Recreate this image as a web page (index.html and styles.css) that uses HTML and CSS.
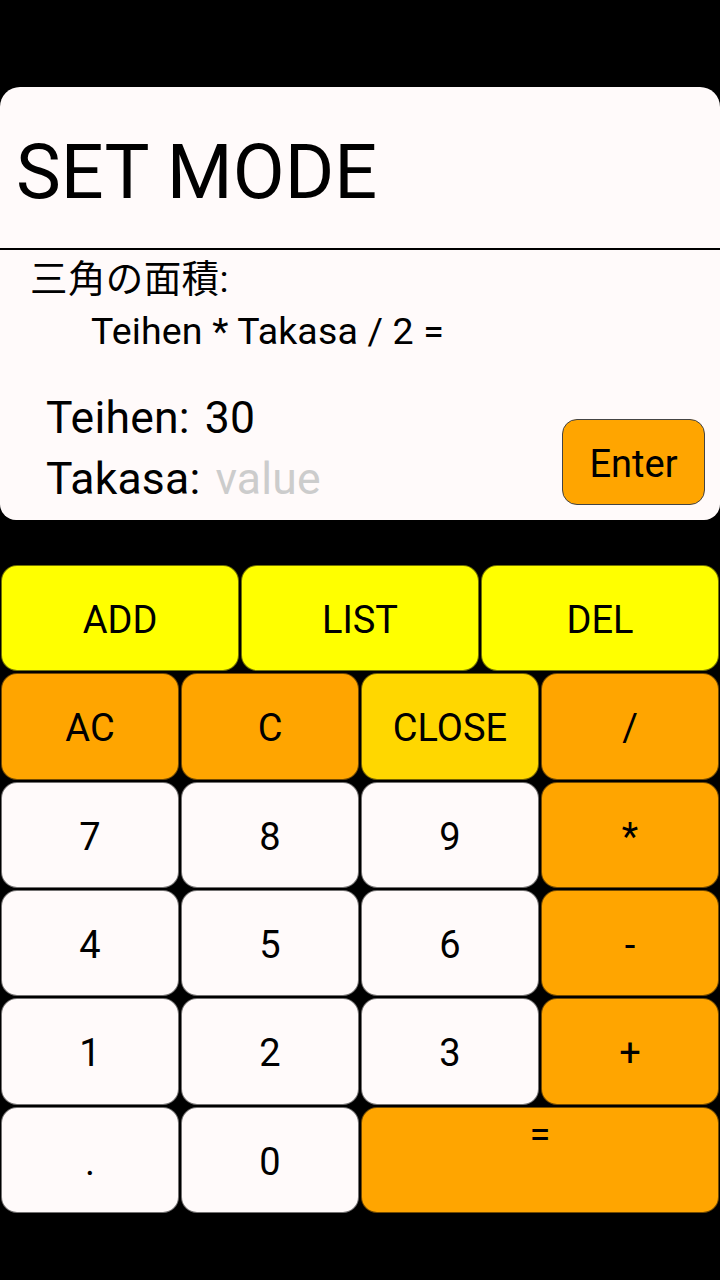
FILE: index.html
```html
<!DOCTYPE html>
<html lang="ja">
<head>
<meta charset="utf-8">
<title>SET MODE</title>
<link rel="stylesheet" href="styles.css">
</head>
<body>
<div class="screen">
  <section class="panel">
    <header class="panel-head">SET MODE</header>
    <div class="divider"></div>
    <div class="formula">
      <div class="formula-title">三角の面積:</div>
      <div class="formula-expr">Teihen * Takasa / 2 =</div>
    </div>
    <div class="inputs">
      <div class="fields">
        <div class="field"><span class="label">Teihen:</span><span class="value">30</span></div>
        <div class="field"><span class="label">Takasa:</span><span class="value hint">value</span></div>
      </div>
      <button class="enter">Enter</button>
    </div>
  </section>

  <div class="keypad">
    <button class="key wide yellow">ADD</button>
    <button class="key wide yellow">LIST</button>
    <button class="key wide yellow">DEL</button>

    <button class="key orange">AC</button>
    <button class="key orange">C</button>
    <button class="key gold">CLOSE</button>
    <button class="key orange">/</button>

    <button class="key white">7</button>
    <button class="key white">8</button>
    <button class="key white">9</button>
    <button class="key orange">*</button>

    <button class="key white">4</button>
    <button class="key white">5</button>
    <button class="key white">6</button>
    <button class="key orange">-</button>

    <button class="key white">1</button>
    <button class="key white">2</button>
    <button class="key white">3</button>
    <button class="key orange">+</button>

    <button class="key white">.</button>
    <button class="key white">0</button>
    <button class="key double orange top">=</button>
  </div>
</div>
</body>
</html>
```

FILE: styles.css
```css
* {
  box-sizing: border-box;
}

html, body {
  margin: 0;
  padding: 0;
  background: #000;
}

body {
  width: 720px;
  height: 1280px;
  overflow: hidden;
  font-family: "Roboto", "Noto Sans CJK JP", sans-serif;
  color: #000;
}

.screen {
  display: flex;
  flex-direction: column;
  padding-top: 87px;
}

.panel {
  background: #fffafa;
  border-radius: 20px 20px 16px 16px;
  padding-bottom: 9.5px;
}

.panel-head {
  height: 161px;
  padding: 40.7px 0 0 16px;
  font-size: 75.5px;
  line-height: 88px;
  font-weight: 400;
}

.divider {
  height: 2px;
  background: #000;
}

.formula {
  padding: 3.4px 0 0 30px;
  font-size: 37.5px;
  line-height: 52px;
}

.formula-title {
  letter-spacing: 0.4px;
}

.formula-expr {
  padding-left: 61px;
  letter-spacing: 0.15px;
}

.inputs {
  display: flex;
  justify-content: space-between;
  align-items: flex-end;
  margin-top: 31px;
}

.fields {
  padding-left: 46px;
  font-size: 44.5px;
  line-height: 61px;
  letter-spacing: 0.2px;
}

.field {
  display: flex;
}

.value {
  margin-left: 15px;
}

.hint {
  color: #cccccc;
}

.enter {
  width: 143px;
  height: 86px;
  margin: 0 15px 5.5px 0;
  padding: 4px 0 0;
  background: #ffa500;
  border: 1.5px solid #444;
  border-radius: 15px;
  font-family: "Roboto", sans-serif;
  font-size: 38px;
  color: #000;
}

.keypad {
  display: grid;
  grid-template-columns: repeat(12, 1fr);
  grid-auto-rows: 1fr;
  gap: 2px;
  height: 648px;
  margin-top: 45px;
  padding: 0 1px;
}

.key {
  grid-column: span 3;
  display: flex;
  align-items: center;
  justify-content: center;
  padding: 4px 0 0;
  margin: 0;
  border: 1px solid rgba(0, 0, 0, 0.55);
  border-radius: 16px;
  font-family: "Roboto", sans-serif;
  font-size: 38px;
  line-height: 44px;
  color: #000;
}

.key.wide {
  grid-column: span 4;
}

.key.double {
  grid-column: span 6;
}

.key.top {
  align-items: flex-start;
  padding-top: 5px;
}

.yellow {
  background: #ffff00;
}

.orange {
  background: #ffa500;
}

.gold {
  background: #ffd700;
}

.white {
  background: #fffafa;
}
```
